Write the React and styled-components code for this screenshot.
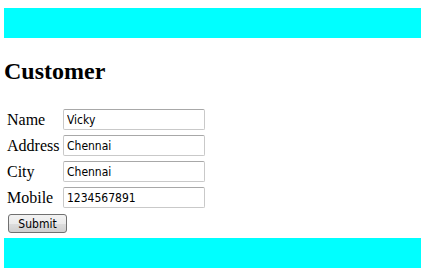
import React from 'react'
import styled, { createGlobalStyle } from 'styled-components'

const GlobalStyle = createGlobalStyle`
  body {
    margin: 0;
    background: #fff;
    font-family: 'Liberation Serif', 'Times New Roman', serif;
    color: #000;
  }
`

const Page = styled.div`
  padding: 8px 0 0 4px;
`

const Band = styled.div`
  height: 30px;
  background-color: #00ffff;
`

const Title = styled.h2`
  margin: 0;
  padding: 19px 0 0 0;
  height: 50px;
  font-size: 24px;
  font-weight: 700;
  box-sizing: border-box;
  line-height: 28px;
`

const Form = styled.form`
  padding: 21px 0 5px 0;
  display: flex;
  flex-direction: column;
`

const Row = styled.div`
  display: grid;
  grid-template-columns: 59px 142px;
  align-items: start;
  height: 26px;
`

const Label = styled.label`
  padding-left: 3px;
  font-size: 16px;
  line-height: 22px;
`

const Field = styled.input`
  box-sizing: border-box;
  width: 142px;
  height: 21px;
  margin: 0;
  border: 1px solid #c9c9c9;
  border-top-color: #a8a8a8;
  border-radius: 2px;
  padding: 1px 3px;
  font-family: 'DejaVu Sans Condensed', 'DejaVu Sans', Tahoma, sans-serif;
  font-stretch: condensed;
  font-size: 12px;
  color: #000;
  background: #fff;
`

const Submit = styled.button`
  align-self: flex-start;
  margin: 1px 0 0 4px;
  width: 59px;
  height: 19px;
  padding: 0;
  border: 1px solid #707070;
  border-radius: 3px;
  background: linear-gradient(#f2f2f2 0%, #ebebeb 50%, #dddddd 51%, #cfcfcf 100%);
  font-family: 'DejaVu Sans Condensed', 'DejaVu Sans', Tahoma, sans-serif;
  font-stretch: condensed;
  font-size: 12px;
  color: #000;
`

const fields = [
  { label: 'Name', value: 'Vicky' },
  { label: 'Address', value: 'Chennai' },
  { label: 'City', value: 'Chennai' },
  { label: 'Mobile', value: '1234567891' }
]

function App () {
  return (
    <Page>
      <GlobalStyle />
      <Band />
      <Title>Customer</Title>
      <Form onSubmit={e => e.preventDefault()}>
        {fields.map(f => (
          <Row key={f.label}>
            <Label>{f.label}</Label>
            <Field defaultValue={f.value} />
          </Row>
        ))}
        <Submit type='submit'>Submit</Submit>
      </Form>
      <Band />
    </Page>
  )
}

export default App
